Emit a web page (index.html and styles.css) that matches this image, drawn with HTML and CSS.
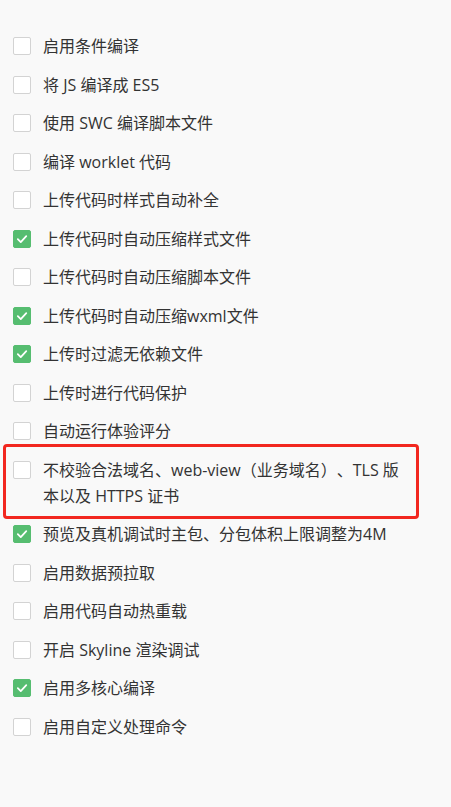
FILE: index.html
```html
<!DOCTYPE html>
<html lang="zh-CN">
<head>
<meta charset="utf-8">
<title>设置</title>
<link rel="stylesheet" href="styles.css">
</head>
<body>
<ul class="options">
  <li class="option"><span class="box"></span><span class="label">启用条件编译</span></li>
  <li class="option"><span class="box"></span><span class="label">将 JS 编译成 ES5</span></li>
  <li class="option"><span class="box"></span><span class="label">使用 SWC 编译脚本文件</span></li>
  <li class="option"><span class="box"></span><span class="label">编译 worklet 代码</span></li>
  <li class="option"><span class="box"></span><span class="label">上传代码时样式自动补全</span></li>
  <li class="option"><span class="box checked"><svg viewBox="0 0 18 18"><polyline points="4.3,9.2 7.6,12.4 13.8,5.8"/></svg></span><span class="label">上传代码时自动压缩样式文件</span></li>
  <li class="option"><span class="box"></span><span class="label">上传代码时自动压缩脚本文件</span></li>
  <li class="option"><span class="box checked"><svg viewBox="0 0 18 18"><polyline points="4.3,9.2 7.6,12.4 13.8,5.8"/></svg></span><span class="label">上传代码时自动压缩wxml文件</span></li>
  <li class="option"><span class="box checked"><svg viewBox="0 0 18 18"><polyline points="4.3,9.2 7.6,12.4 13.8,5.8"/></svg></span><span class="label">上传时过滤无依赖文件</span></li>
  <li class="option"><span class="box"></span><span class="label">上传时进行代码保护</span></li>
  <li class="option"><span class="box"></span><span class="label">自动运行体验评分</span></li>
  <li class="option highlighted"><span class="box"></span><span class="label">不校验合法域名、web-view（业务域名）、TLS 版本以及 HTTPS 证书</span></li>
  <li class="option"><span class="box checked"><svg viewBox="0 0 18 18"><polyline points="4.3,9.2 7.6,12.4 13.8,5.8"/></svg></span><span class="label">预览及真机调试时主包、分包体积上限调整为4M</span></li>
  <li class="option"><span class="box"></span><span class="label">启用数据预拉取</span></li>
  <li class="option"><span class="box"></span><span class="label">启用代码自动热重载</span></li>
  <li class="option"><span class="box"></span><span class="label">开启 Skyline 渲染调试</span></li>
  <li class="option"><span class="box checked"><svg viewBox="0 0 18 18"><polyline points="4.3,9.2 7.6,12.4 13.8,5.8"/></svg></span><span class="label">启用多核心编译</span></li>
  <li class="option"><span class="box"></span><span class="label">启用自定义处理命令</span></li>
</ul>
</body>
</html>
```

FILE: styles.css
```css
html, body {
  margin: 0;
  padding: 0;
  background: #f9f9f9;
}

body {
  width: 451px;
  min-height: 807px;
  font-family: "Open Sans", "Noto Sans CJK SC", sans-serif;
  font-size: 16px;
  color: #333333;
  text-spacing-trim: space-all;
}

.options {
  list-style: none;
  margin: 0;
  padding: 26.75px 0 0 0;
}

.option {
  display: flex;
  align-items: flex-start;
  gap: 12px;
  padding: 6.25px 0 6.25px 13px;
  line-height: 26px;
  position: relative;
}

.box {
  flex: 0 0 auto;
  width: 18px;
  height: 18px;
  margin-top: 4px;
  box-sizing: border-box;
  border: 1px solid #d3d3d3;
  border-radius: 2px;
  background: #ffffff;
}

.box.checked {
  border-color: #56bd70;
  background: #56bd70;
}

.box svg {
  display: block;
  width: 16px;
  height: 16px;
}

.box svg polyline {
  fill: none;
  stroke: #ffffff;
  stroke-width: 2;
  stroke-linecap: round;
  stroke-linejoin: round;
}

.label {
  flex: 0 1 auto;
  max-width: 365px;
  white-space: normal;
}

.highlighted::after {
  content: "";
  position: absolute;
  top: -6.25px;
  left: 3px;
  width: 416px;
  bottom: -4.25px;
  box-sizing: border-box;
  border: 3px solid #f2271f;
  border-radius: 4px;
  pointer-events: none;
}
```
